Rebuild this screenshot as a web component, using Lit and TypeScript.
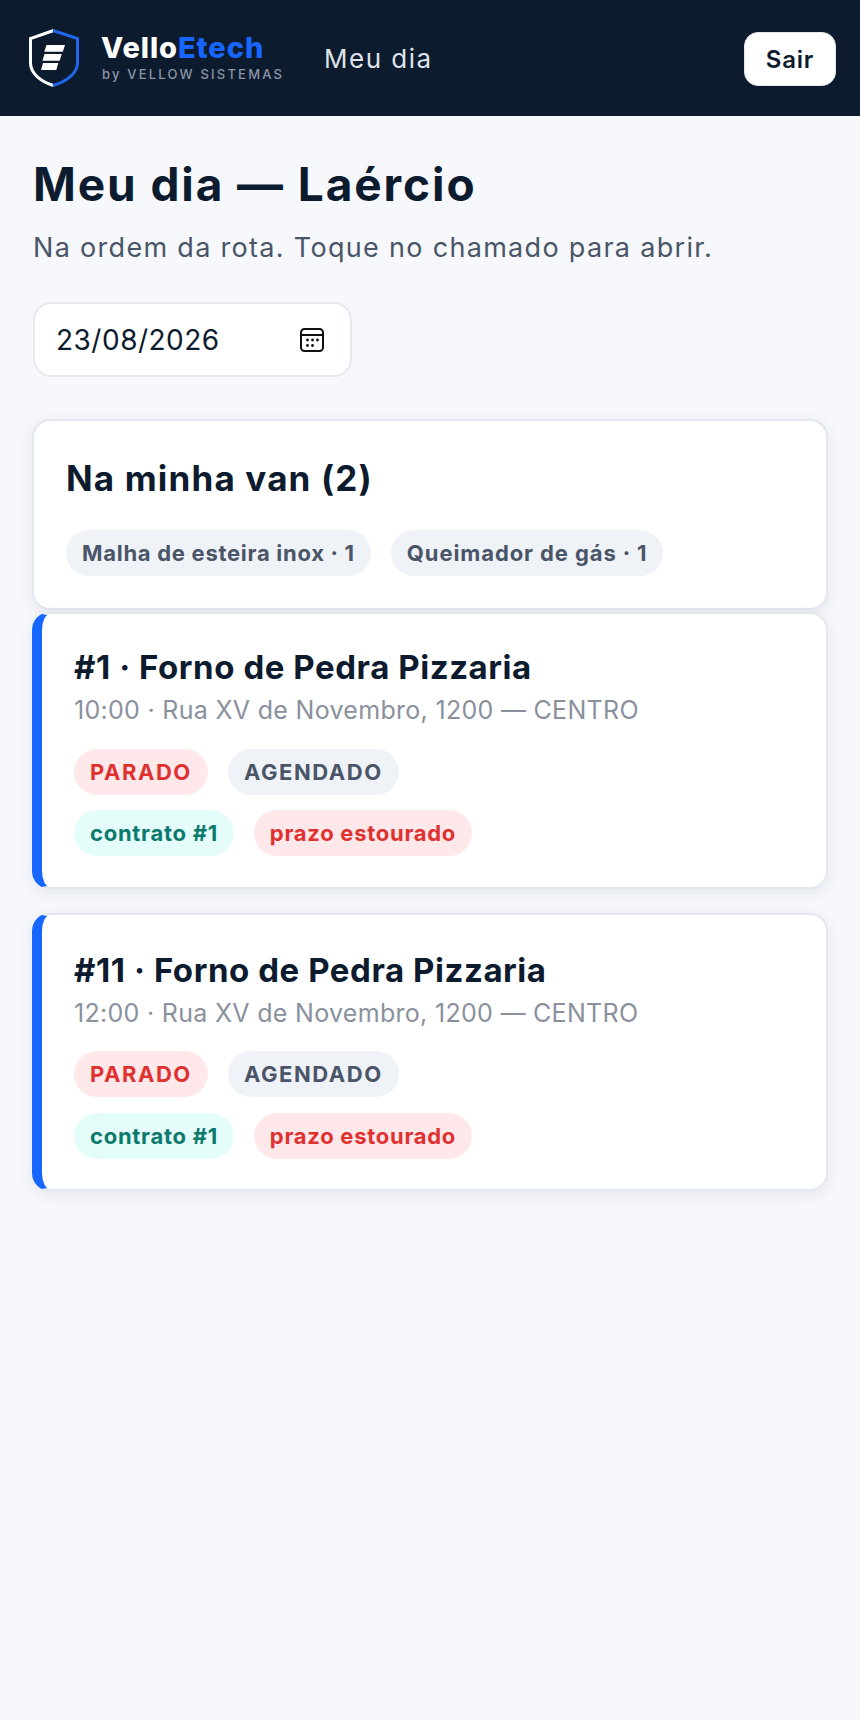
import { LitElement, html, css } from "lit";
import { customElement } from "lit/decorators.js";

@customElement("app-root")
export class AppRoot extends LitElement {
  static styles = css`
    :host { display: block; min-height: 1720px; background: #f6f8fc; font-family: "Inter", "Noto Sans", sans-serif; color: #0d1b2e; }
    * { box-sizing: border-box; }
    header { height: 116px; background: #0d1b2e; display: flex; align-items: center; padding: 0 24px 0 29px; }
    .logo { display: block; flex: none; }
    .brand { margin-left: 22px; display: flex; flex-direction: column; width: 182px; }
    .name { font-size: 29px; font-weight: 800; line-height: 30px; letter-spacing: .95px; color: #fff; margin-top: -2px; }
    .name span { color: #1766ff; }
    .by { font-size: 13px; font-weight: 500; line-height: 16px; letter-spacing: 2.2px; color: #8b95a7; margin: 3px 0 0 1px; white-space: nowrap; }
    .nav { margin-left: 41px; font-size: 26px; font-weight: 400; color: #dfe3ea; letter-spacing: 1.5px; }
    .sair { margin-left: auto; margin-top: 2px; width: 92px; height: 54px; background: #fff; border: 1px solid #e3e7ef; border-radius: 14px; display: flex; align-items: center; justify-content: center; font-size: 24px; font-weight: 600; letter-spacing: .8px; color: #0d1b2e; }
    main { padding: 0 32px; display: flex; flex-direction: column; }
    h1 { margin: 38px 0 0 1px; font-size: 46px; line-height: 60px; font-weight: 700; letter-spacing: 1.9px; }
    .sub { margin: 16px 0 0 1px; font-size: 27px; line-height: 36px; color: #4a5568; letter-spacing: 1.31px; }
    .date { margin: 36px 0 0 1px; width: 319px; height: 75px; background: #fff; border: 2px solid #e6e9ef; border-radius: 18px; display: flex; align-items: center; justify-content: space-between; padding: 0 26px 0 21px; font-size: 28px; letter-spacing: .5px; }
    .date svg { display: block; }
    .card { background: #fff; border: 2px solid #e3e7ef; border-radius: 18px; box-shadow: 0 4px 16px rgba(13,27,46,.08); }
    .van { margin-top: 42px; height: 191px; padding: 34px 32px 0; }
    h2 { margin: 0; font-size: 35px; line-height: 46px; font-weight: 700; letter-spacing: 1.16px; }
    .chips { display: flex; flex-wrap: wrap; gap: 14px 20px; }
    .van .chips { margin-top: 29px; }
    .chip { height: 46px; display: inline-flex; align-items: center; padding: 0 16px; border-radius: 23px; background: #eff2f7; color: #4a5568; font-size: 22px; font-weight: 700; white-space: nowrap; letter-spacing: .72px; }
    .van .chip:last-child { letter-spacing: .9px; }
    .up { letter-spacing: 1.55px; }
    .red { background: #ffe8ea; color: #e03131; }
    .teal { background: #e5fdfa; color: #0b7a6d; }
    .job { border-left: 10px solid #1766ff; padding: 32px 32px 0 32px; }
    .job.a { margin-top: 2px; height: 277px; }
    .job.b { margin-top: 24px; height: 278px; padding-top: 34px; }
    h3 { margin: 0; font-size: 33px; line-height: 42px; font-weight: 700; letter-spacing: .56px; }
    .meta { margin: 4px 0 0; font-size: 25px; line-height: 36px; color: #8a919d; letter-spacing: .3px; }
    .job .chips { margin-top: 21px; }
    .job .chips.second { margin-top: 15px; }
    .job.b .chips { margin-top: 20px; }
    .job.b .chips.second { margin-top: 16px; }
  `;

  job(cls: string, t: string, m: string) {
    return html`<section class="card job ${cls}">
      <h3>${t}</h3>
      <p class="meta">${m}</p>
      <div class="chips">
        <span class="chip red up">PARADO</span><span class="chip up">AGENDADO</span>
      </div>
      <div class="chips second">
        <span class="chip teal">contrato #1</span><span class="chip red">prazo estourado</span>
      </div>
    </section>`;
  }

  render() {
    return html`
      <header>
        <svg class="logo" width="50" height="58" viewBox="0 0 50 58" fill="none">
          <path d="M24.5 1.5 L1.5 9.5 V34 C1.5 45 13 53 24.5 56.5" stroke="#fff" stroke-width="3"/>
          <path d="M24 1.5 L48.5 9.5 V34 C48.5 45 36 53 24 56.5" stroke="#1f66ea" stroke-width="3"/>
          <path d="M17.5 16 H36 L33.8 22.7 H15.3 Z M15.5 25 H32.7 L30.7 31.7 H13.5 Z M14 34 H29.3 L27.3 41 H12 Z" fill="#fff"/>
        </svg>
        <div class="brand">
          <div class="name">Vello<span>Etech</span></div>
          <div class="by">by VELLOW SISTEMAS</div>
        </div>
        <div class="nav">Meu dia</div>
        <div class="sair">Sair</div>
      </header>
      <main>
        <h1>Meu dia — Laércio</h1>
        <p class="sub">Na ordem da rota. Toque no chamado para abrir.</p>
        <div class="date">
          <span>23/08/2026</span>
          <svg width="24" height="24" viewBox="0 0 24 24" fill="none">
            <rect x="1" y="1" width="22" height="22" rx="3.5" stroke="#111" stroke-width="2"/>
            <path d="M1.5 7 H22.5" stroke="#111" stroke-width="2"/>
            <g fill="#111"><circle cx="7.5" cy="12" r="1.4"/><circle cx="12.5" cy="12" r="1.4"/><circle cx="17.5" cy="12" r="1.4"/><circle cx="7.5" cy="17.5" r="1.4"/><circle cx="12.5" cy="17.5" r="1.4"/></g>
          </svg>
        </div>
        <section class="card van">
          <h2>Na minha van (2)</h2>
          <div class="chips">
            <span class="chip">Malha de esteira inox · 1</span>
            <span class="chip">Queimador de gás · 1</span>
          </div>
        </section>
        ${this.job("a", "#1 · Forno de Pedra Pizzaria", "10:00 · Rua XV de Novembro, 1200 — CENTRO")}
        ${this.job("b", "#11 · Forno de Pedra Pizzaria", "12:00 · Rua XV de Novembro, 1200 — CENTRO")}
      </main>
    `;
  }
}
